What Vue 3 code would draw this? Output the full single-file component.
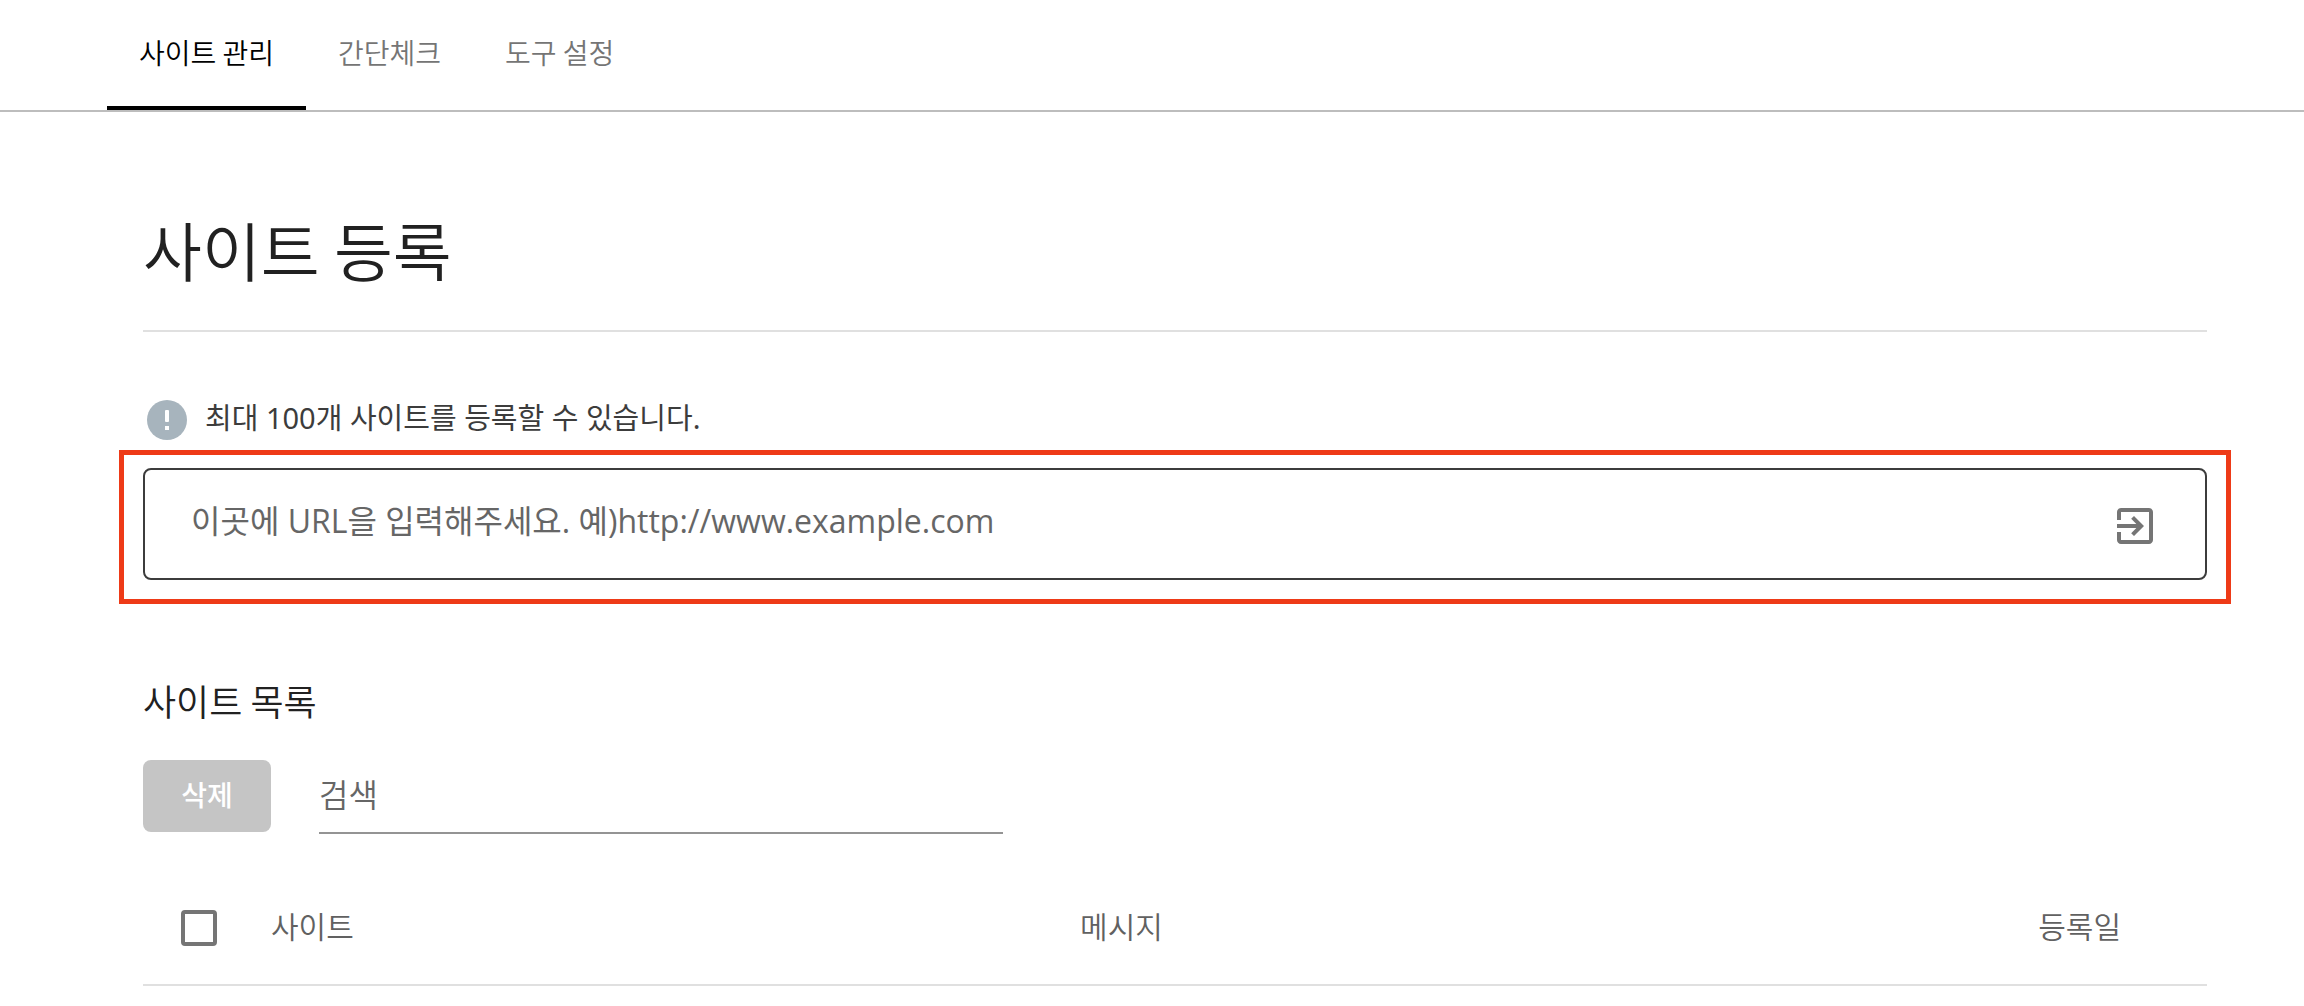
<template>
    <div class="page">
        <nav class="tabs">
            <a
                v-for="tab in tabs"
                :key="tab.id"
                :href="'#' + tab.id"
                class="tab"
                :class="{ active: tab.id === current }"
                @click.prevent="current = tab.id"
            >{{ tab.label }}</a>
        </nav>

        <main class="content">
            <h1 class="title">사이트 등록</h1>

            <label class="notice" for="site-url">
                <svg class="notice-icon" viewBox="0 0 40 40" aria-hidden="true">
                    <circle cx="20" cy="20" r="20" fill="#a7b4bd" />
                    <rect x="18" y="10" width="4" height="12" rx="1" fill="#fff" />
                    <rect x="18" y="26" width="4" height="4" fill="#fff" />
                </svg>
                <span>최대 100개 사이트를 등록할 수 있습니다.</span>
            </label>

            <div class="highlight">
                <form class="url-box" @submit.prevent="addSite">
                    <input
                        id="site-url"
                        v-model="url"
                        type="text"
                        class="url-input"
                        placeholder="이곳에 URL을 입력해주세요. 예)http://www.example.com"
                    >
                    <button type="submit" class="submit" aria-label="등록">
                        <svg viewBox="0 0 24 24" aria-hidden="true">
                            <path fill="#757575" d="M10.09 15.59L11.5 17l5-5-5-5-1.41 1.41L12.67 11H3v2h9.67l-2.58 2.59zM19 3H5c-1.11 0-2 .9-2 2v4h2V5h14v14H5v-4H3v4c0 1.1.89 2 2 2h14c1.1 0 2-.9 2-2V5c0-1.1-.9-2-2-2z" />
                        </svg>
                    </button>
                </form>
            </div>

            <h2 class="subtitle">사이트 목록</h2>

            <div class="toolbar">
                <button type="button" class="delete" :disabled="!allChecked">삭제</button>
                <input v-model="keyword" type="text" class="search" placeholder="검색" aria-label="검색">
            </div>

            <table class="sites">
                <thead>
                    <tr>
                        <th class="col-check">
                            <input v-model="allChecked" type="checkbox" class="check" aria-label="전체 선택">
                        </th>
                        <th class="col-site">사이트</th>
                        <th class="col-message">메시지</th>
                        <th class="col-date">등록일</th>
                    </tr>
                </thead>
                <tbody>
                    <tr v-for="site in filtered" :key="site.url">
                        <td class="col-check"></td>
                        <td class="col-site">{{ site.url }}</td>
                        <td class="col-message">{{ site.message }}</td>
                        <td class="col-date">{{ site.date }}</td>
                    </tr>
                </tbody>
            </table>
        </main>
    </div>
</template>

<script setup>
import { computed, ref } from 'vue'

const tabs = [
    { id: 'sites', label: '사이트 관리' },
    { id: 'check', label: '간단체크' },
    { id: 'tools', label: '도구 설정' },
]

const current = ref('sites')
const url = ref('')
const keyword = ref('')
const allChecked = ref(false)
const sites = ref([])

const filtered = computed(() => sites.value.filter(s => s.url.includes(keyword.value)))

function addSite() {
    if (!url.value || sites.value.length >= 100) return
    sites.value.push({ url: url.value, message: '', date: new Date().toISOString().slice(0, 10) })
    url.value = ''
}
</script>

<style>
body { margin: 0; background: #fff; }
</style>

<style scoped>
.page {
    font-family: "Noto Sans CJK KR", "Noto Sans", sans-serif;
    font-size: 28px; font-weight: 350; color: #212121;
}
.page * { box-sizing: border-box; }
input, button { font-family: inherit; font-weight: inherit; }

.tabs {
    display: flex; height: 112px; padding-left: 107px;
    border-bottom: 2px solid #bdbdbd;
}
.tab {
    padding: 32px 32px 0; line-height: 40px;
    color: #757575; text-decoration: none;
    border-bottom: 4px solid transparent;
}
.tab.active { color: #000; border-bottom-color: #000; }

.content { padding: 88px 97px 0 143px; }
.title {
    margin: 0; padding-bottom: 34px; font-size: 64px; line-height: 96px;
    font-weight: 350; border-bottom: 2px solid #e0e0e0;
}

.notice {
    display: flex; align-items: center; gap: 18px;
    margin: 68px 0 10px 4px; line-height: 36px; color: #3c3c3c;
    font-family: "Noto Sans", "Noto Sans CJK KR", sans-serif;
    font-size: 29px; font-weight: 400;
}
.notice span { padding-bottom: 4px; }
.notice-icon { width: 40px; height: 40px; flex: none; }

.highlight {
    margin: 0 -24px; padding: 13px 19px 19px;
    border: 5px solid #ee3a17;
}
.url-box {
    display: flex; align-items: center; height: 112px;
    padding: 0 46px; border: 2px solid #3c3c3c; border-radius: 8px;
}
.url-input {
    flex: 1; min-width: 0; height: 48px; padding: 0; margin-bottom: 8px;
    border: 0; outline: none; background: none;
    font-family: "Open Sans", "Noto Sans CJK KR", sans-serif;
    font-size: 32px; font-weight: 400; color: #212121;
}
.url-input::placeholder { color: #666; opacity: 1; }
.submit {
    width: 48px; height: 52px; padding: 4px 0 0;
    border: 0; background: none; cursor: pointer;
}
.submit svg { display: block; width: 48px; height: 48px; }

.subtitle { margin: 70px 0 0; font-size: 36px; line-height: 52px; font-weight: 350; }

.toolbar { display: flex; gap: 48px; margin-top: 34px; }
.delete {
    width: 128px; height: 72px; padding: 0 0 4px;
    border: 0; border-radius: 8px; background: #c5c5c5;
    color: #fff; font-size: 28px; font-weight: 500;
}
.search {
    width: 33.14%; height: 74px; padding: 0 0 6px; border: 0;
    border-bottom: 2px solid #949494; outline: none; background: none;
    font-size: 32px; color: #212121;
}
.search::placeholder { color: #666; opacity: 1; }

.sites {
    width: 100%; margin-top: 38px; table-layout: fixed;
    border-collapse: separate; border-spacing: 0; font-size: 30px; color: #616161;
}
.sites th, .sites td {
    height: 114px; padding: 0 0 6px; text-align: left;
    font-weight: 350; border-bottom: 2px solid #e0e0e0;
}
.sites .col-check { width: 128px; padding: 0 0 0 38px; }
.sites .col-date { width: 254px; padding-right: 86px; text-align: right; }
.sites .col-site { width: 39.2%; }
.check {
    display: block; appearance: none; width: 36px; height: 36px; margin: 0;
    border: 4px solid #757575; border-radius: 4px;
}
.check:checked { background: #757575; }
</style>
